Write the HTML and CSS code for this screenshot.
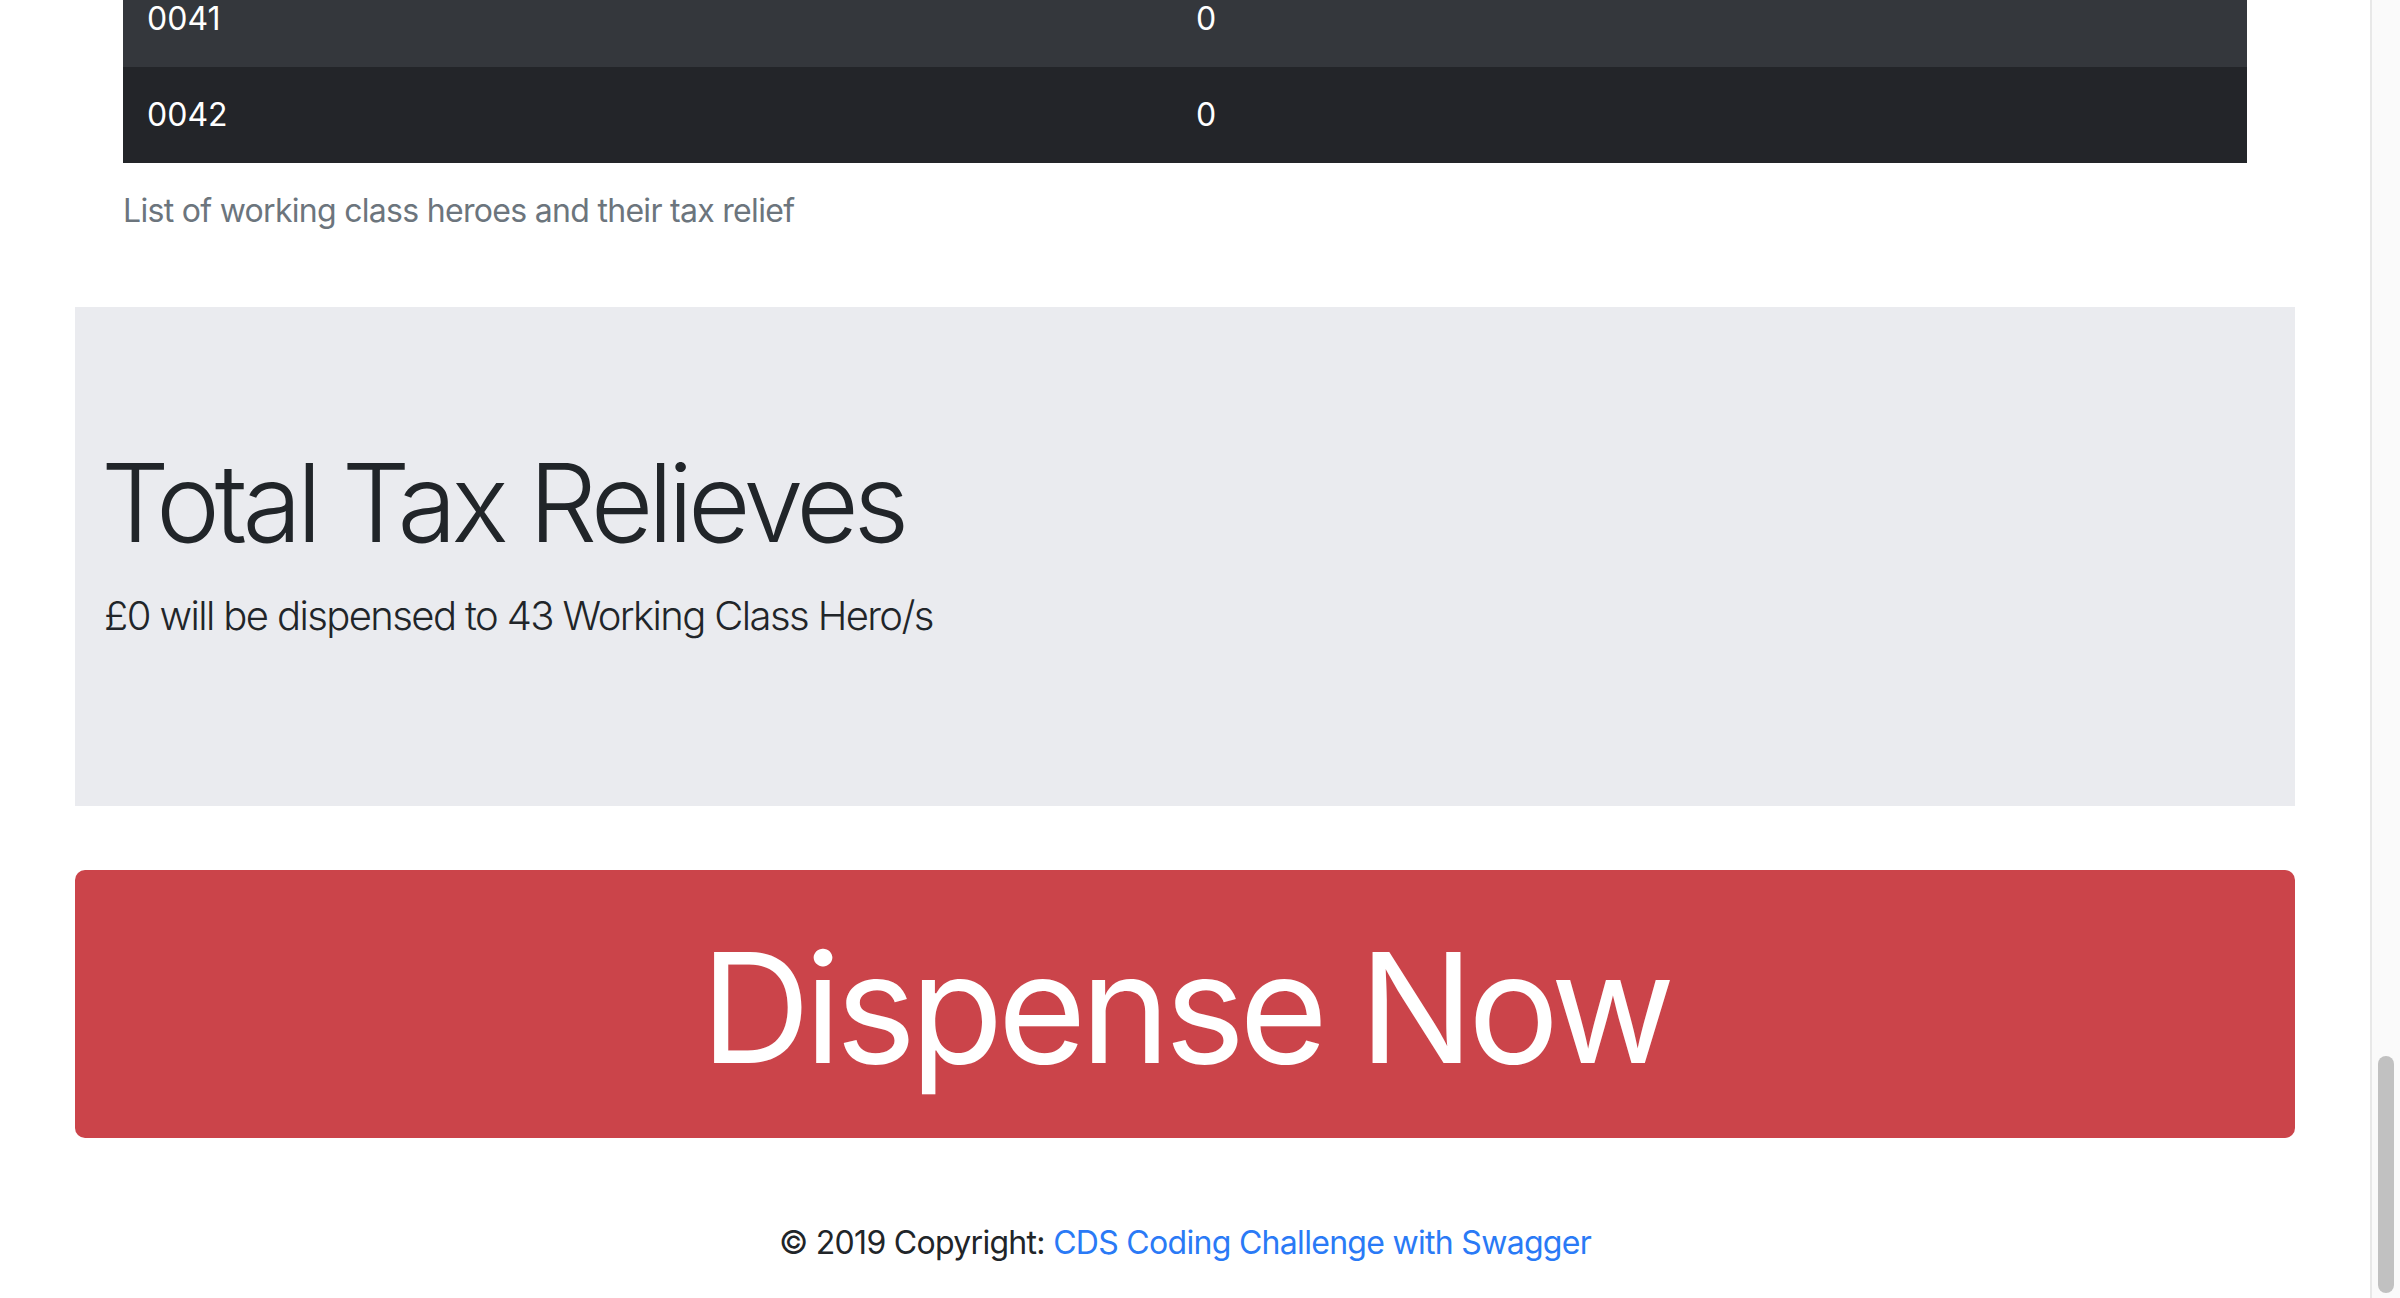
FILE: index.html
```html
<!DOCTYPE html>
<html lang="en">
<head>
<meta charset="utf-8">
<title>Working Class Heroes</title>
<link rel="stylesheet" href="styles.css">
</head>
<body>
<div class="page">
  <main class="container">
    <div class="table-wrap">
      <table class="heroes">
        <caption>List of working class heroes and their tax relief</caption>
        <tbody>
          <tr class="row-odd"><td class="col-id">0041</td><td>0</td></tr>
          <tr class="row-even"><td class="col-id">0042</td><td>0</td></tr>
        </tbody>
      </table>
    </div>
    <section class="jumbotron">
      <h1 class="display">Total Tax Relieves</h1>
      <p class="lead">£0 will be dispensed to 43 Working Class Hero/s</p>
    </section>
    <button class="btn-dispense" type="button">Dispense Now</button>
  </main>
  <footer class="footer">© 2019 Copyright: <a href="#" class="footer-link">CDS Coding Challenge with Swagger</a></footer>
</div>
<div class="scrollbar"><div class="scroll-thumb"></div></div>
</body>
</html>
```

FILE: styles.css
```css
html, body {
  margin: 0;
  padding: 0;
  height: 100%;
}
body {
  display: flex;
  overflow: hidden;
  background: #ffffff;
  font-family: Inter, "Noto Sans", "Liberation Sans", sans-serif;
  color: #212529;
}
.page {
  flex: 1;
  min-width: 0;
  overflow: hidden;
}
.container {
  max-width: 2220px;
  margin: -29px auto 0;
  padding: 0 30px;
}
.table-wrap {
  padding: 0 48px;
  margin-bottom: 48px;
}
.heroes {
  width: 100%;
  border-collapse: collapse;
  color: #ffffff;
  font-size: 32px;
  line-height: 48px;
}
.heroes caption {
  caption-side: bottom;
  text-align: left;
  padding: 24px 0;
  color: #6c757d;
  letter-spacing: -0.7px;
}
.heroes td {
  padding: 24px;
  vertical-align: middle;
}
.col-id {
  width: 1001px;
}
.row-odd {
  background: #34373c;
}
.row-even {
  background: #232529;
}
.jumbotron {
  background: #eaebef;
  padding: 128px 32px 128px 29px;
  margin-bottom: 64px;
}
.display {
  margin: 0 0 16px -3px;
  font-size: 108px;
  font-weight: 300;
  line-height: 135px;
  letter-spacing: -5.2px;
}
.lead {
  margin: 0 0 32px;
  font-size: 40px;
  font-weight: 300;
  line-height: 60px;
  letter-spacing: -1.6px;
}
.btn-dispense {
  display: block;
  width: 100%;
  height: 268px;
  padding: 8px 0 0;
  border: none;
  border-radius: 10px;
  background: #cb444a;
  color: #ffffff;
  font-family: Inter, "Noto Sans", "Liberation Sans", sans-serif;
  font-size: 152px;
  font-weight: 400;
  line-height: 260px;
  letter-spacing: -5.7px;
  text-align: center;
}
.footer {
  margin-top: 49px;
  padding: 32px 0;
  text-align: center;
  font-size: 32px;
  line-height: 48px;
  color: #212529;
  letter-spacing: -0.7px;
}
.footer-link {
  color: #2a7af6;
  text-decoration: none;
}
.scrollbar {
  width: 28px;
  flex: 0 0 28px;
  border-left: 2px solid #e8e8e8;
  background: #fafafa;
  display: flex;
  flex-direction: column;
  justify-content: flex-end;
  align-items: center;
  padding-bottom: 5px;
  box-sizing: content-box;
}
.scroll-thumb {
  width: 16px;
  height: 237px;
  border-radius: 8px;
  background: #c1c1c1;
}
```
